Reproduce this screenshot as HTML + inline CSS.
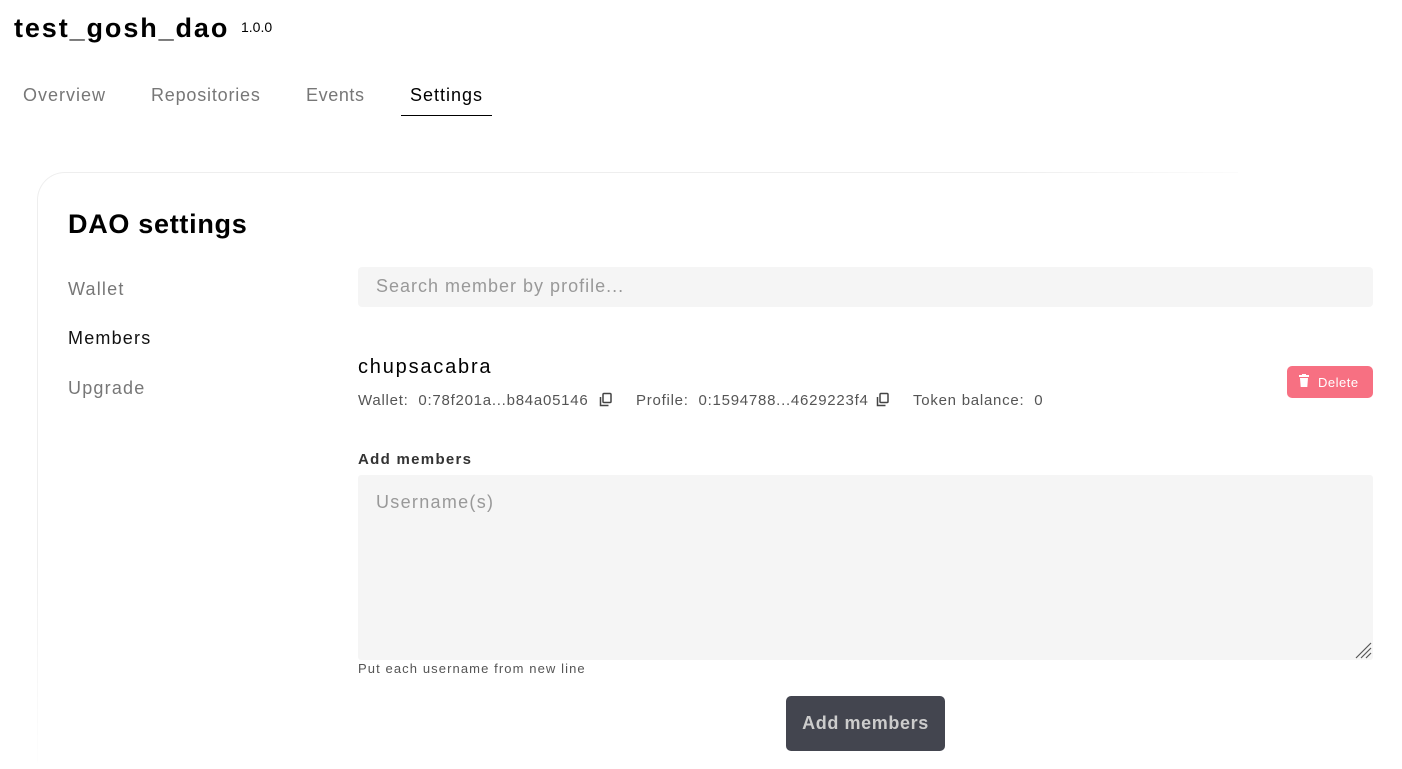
<!DOCTYPE html>
<html><head><meta charset="utf-8"><style>
html,body{margin:0;width:1402px;height:769px;overflow:hidden}
body{background:#fff;font-family:"Liberation Sans",sans-serif;position:relative;color:#000}
.a{position:absolute;white-space:nowrap}
.card{position:absolute;left:37px;top:172px;width:1200px;height:590px;border-top:1px solid #eee;border-left:1px solid #eee;border-top-left-radius:28px;}
.fade{position:absolute;left:1000px;top:160px;width:300px;height:20px;background:linear-gradient(90deg,rgba(255,255,255,0),#fff)}
.fade2{position:absolute;left:30px;top:560px;width:20px;height:220px;background:linear-gradient(180deg,rgba(255,255,255,0),#fff)}
.meta{font-size:15px;color:#555;letter-spacing:0.75px}
</style></head><body>
<div class="a" style="left:14px;top:13px;font-size:27px;font-weight:bold;letter-spacing:1.9px">test_gosh_dao</div>
<div class="a" style="left:241px;top:19px;font-size:14px">1.0.0</div>
<div class="a" style="left:23px;top:85px;font-size:18px;color:#777;letter-spacing:1px">Overview</div>
<div class="a" style="left:151px;top:85px;font-size:18px;color:#777;letter-spacing:0.8px">Repositories</div>
<div class="a" style="left:306px;top:85px;font-size:18px;color:#777;letter-spacing:0.6px">Events</div>
<div class="a" style="left:410px;top:85px;font-size:18px;color:#000;letter-spacing:1px">Settings</div>
<div class="a" style="left:401px;top:115px;width:91px;height:1px;background:#000"></div>
<div class="card"></div><div class="fade"></div><div class="fade2"></div>
<div class="a" style="left:68px;top:209px;font-size:27px;font-weight:bold;letter-spacing:0.7px">DAO settings</div>
<div class="a" style="left:68px;top:279px;font-size:18px;color:#777;letter-spacing:1.2px">Wallet</div>
<div class="a" style="left:68px;top:328px;font-size:18px;color:#111;letter-spacing:1.2px">Members</div>
<div class="a" style="left:68px;top:378px;font-size:18px;color:#777;letter-spacing:1.2px">Upgrade</div>
<div class="a" style="left:358px;top:267px;width:1015px;height:40px;background:#f5f5f5;border-radius:4px"></div>
<div class="a" style="left:376px;top:276px;font-size:18px;color:#999;letter-spacing:1px">Search member by profile...</div>
<div class="a" style="left:358px;top:356px;font-size:20px;letter-spacing:1.8px">chupsacabra</div>
<div class="a meta" style="left:358px;top:392px">Wallet:&nbsp; 0:78f201a...b84a05146</div>
<svg class="a" style="left:598px;top:392px" width="16" height="16" viewBox="0 0 16 16" fill="none" stroke="#444" stroke-width="1.5"><rect x="5" y="1.5" width="8" height="9" rx="1"/><path d="M2.5 5v8.5h8"/></svg>
<div class="a meta" style="left:636px;top:392px">Profile:&nbsp; 0:1594788...4629223f4</div>
<svg class="a" style="left:875px;top:392px" width="16" height="16" viewBox="0 0 16 16" fill="none" stroke="#444" stroke-width="1.5"><rect x="5" y="1.5" width="8" height="9" rx="1"/><path d="M2.5 5v8.5h8"/></svg>
<div class="a meta" style="left:913px;top:392px">Token balance:&nbsp; 0</div>
<div class="a" style="left:1287px;top:366px;width:86px;height:32px;background:#f77082;border-radius:5px"></div>
<svg class="a" style="left:1299px;top:374px" width="10" height="13" viewBox="0 0 10 13" fill="#fff"><rect x="0" y="1" width="10" height="2"/><rect x="3" y="0" width="4" height="2"/><path d="M1 4h8l-.7 9H1.7z"/></svg>
<div class="a" style="left:1318px;top:375px;font-size:13px;color:#fff;letter-spacing:0.5px">Delete</div>
<div class="a" style="left:358px;top:451px;font-size:15px;font-weight:bold;color:#333;letter-spacing:1.3px">Add members</div>
<div class="a" style="left:358px;top:475px;width:1015px;height:185px;background:#f5f5f5;border-radius:3px"></div>
<div class="a" style="left:376px;top:492px;font-size:18px;color:#999;letter-spacing:1.3px">Username(s)</div>
<svg class="a" style="left:1354px;top:641px" width="18" height="18" viewBox="0 0 18 18" stroke="#555" stroke-width="1.2"><path d="M2 17L17 2M7 17L17 7M12 17L17 12"/></svg>
<div class="a" style="left:358px;top:661px;font-size:13px;color:#555;letter-spacing:1.1px">Put each username from new line</div>
<div class="a" style="left:786px;top:696px;width:159px;height:55px;background:#43454f;border-radius:5px"></div>
<div class="a" style="left:786px;top:713px;width:159px;text-align:center;font-size:18px;font-weight:bold;color:#ccc;letter-spacing:0.6px">Add members</div>
</body></html>
